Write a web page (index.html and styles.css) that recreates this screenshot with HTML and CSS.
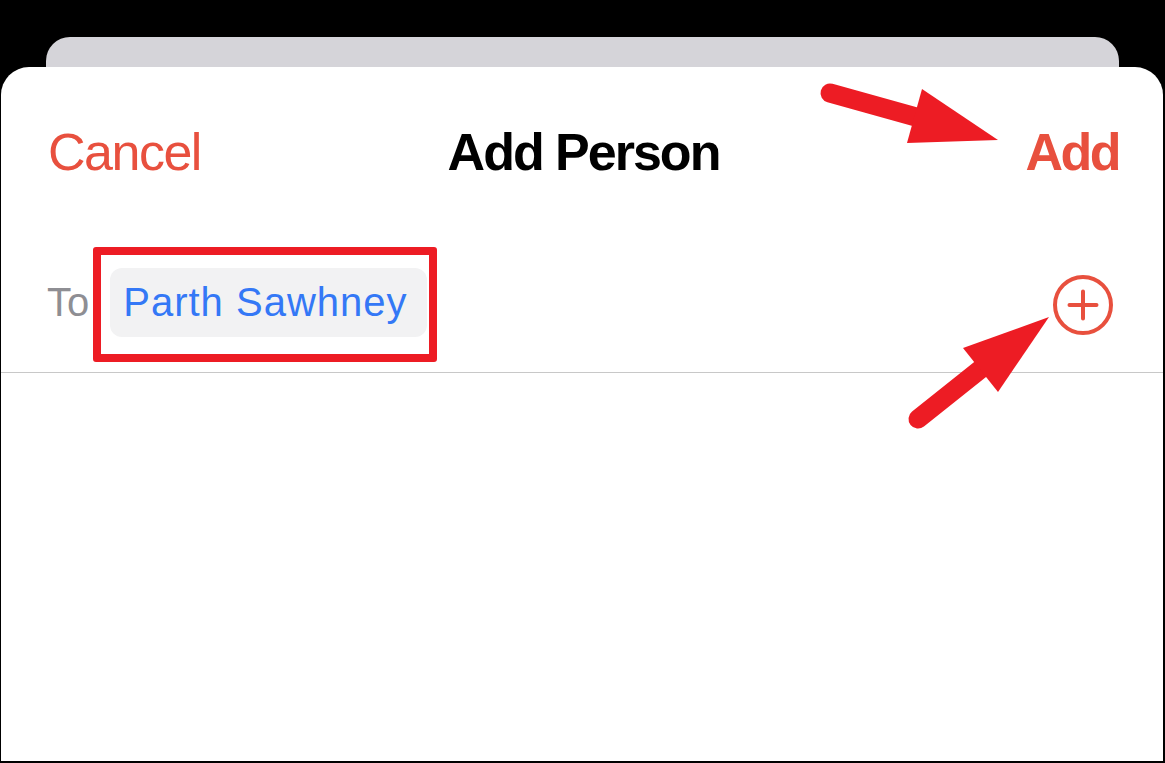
FILE: index.html
```html
<!DOCTYPE html>
<html lang="en">

<head>
    <meta charset="UTF-8">
    <meta name="viewport" content="width=device-width, initial-scale=1.0">
    <title>Add Person</title>
    <link rel="stylesheet" href="styles.css">
</head>

<body>
    <div class="screen">
        <div class="back-card"></div>

        <div class="sheet">
            <div class="nav-bar">
                <span class="nav-cancel">Cancel</span>
                <span class="nav-title">Add Person</span>
                <span class="nav-add">Add</span>
            </div>

            <div class="to-row">
                <span class="to-label">To</span>
                <div class="highlight">
                    <span class="chip">Parth Sawhney</span>
                </div>
                <svg class="plus-btn" width="64" height="64" viewBox="0 0 64 64">
                    <circle cx="32" cy="32" r="28" fill="none" stroke="#e8503e" stroke-width="4"/>
                    <path d="M18.5 32 H45.5 M32 18.5 V45.5" stroke="#e8503e" stroke-width="4" stroke-linecap="round"/>
                </svg>
            </div>
        </div>

        <!-- annotation arrows -->
        <svg class="arrows" width="1165" height="763" viewBox="0 0 1165 763">
            <line x1="830" y1="93" x2="916" y2="117" stroke="#ed1c24" stroke-width="19" stroke-linecap="round"/>
            <polygon points="922,89 998,140 907,143" fill="#ed1c24"/>
            <line x1="918" y1="419" x2="982" y2="368" stroke="#ed1c24" stroke-width="19" stroke-linecap="round"/>
            <polygon points="963,348 1049,317 998,392" fill="#ed1c24"/>
        </svg>
    </div>
</body>

</html>
```

FILE: styles.css
```css
body {
    margin: 0;
    padding: 0;
    background: #000;
    font-family: 'Liberation Sans', Arial, sans-serif;
}

.screen {
    position: relative;
    width: 1165px;
    height: 763px;
    padding: 37px 2px 2px 1px;
    box-sizing: border-box;
    display: flex;
    flex-direction: column;
    overflow: hidden;
}

.back-card {
    height: 30px;
    margin: 0 44px 0 45px;
    background: #d5d4d9;
    border-radius: 24px 24px 0 0;
    flex-shrink: 0;
}

.sheet {
    flex: 1;
    background: #fff;
    border-radius: 28px 28px 0 0;
}

.nav-bar {
    display: grid;
    grid-template-columns: 1fr auto 1fr;
    align-items: center;
    padding: 55px 44px 0 47px;
    font-size: 52px;
    line-height: 60px;
}

.nav-cancel {
    color: #e8503e;
    letter-spacing: -1.5px;
}

.nav-title {
    color: #000;
    font-weight: bold;
    letter-spacing: -2px;
}

.nav-add {
    justify-self: end;
    color: #e8503e;
    font-weight: bold;
    letter-spacing: -2.5px;
}

.to-row {
    display: flex;
    align-items: baseline;
    margin-top: 65px;
    padding: 0 48px 10px 46px;
    border-bottom: 1px solid #c8c8c8;
    font-size: 40px;
}

.to-label {
    color: #8e8e93;
    margin-right: 4px;
}

.highlight {
    border: 8px solid #ed1c24;
    border-radius: 3px;
    padding: 13px 2px 17px 9px;
}

.chip {
    display: inline-block;
    width: 317px;
    height: 69px;
    line-height: 69px;
    box-sizing: border-box;
    padding-left: 13px;
    background: #f2f2f3;
    border-radius: 12px;
    color: #3478f6;
    letter-spacing: 1px;
}

.plus-btn {
    align-self: center;
    margin-left: auto;
}

.arrows {
    position: absolute;
    top: 0;
    left: 0;
    pointer-events: none;
}
```
